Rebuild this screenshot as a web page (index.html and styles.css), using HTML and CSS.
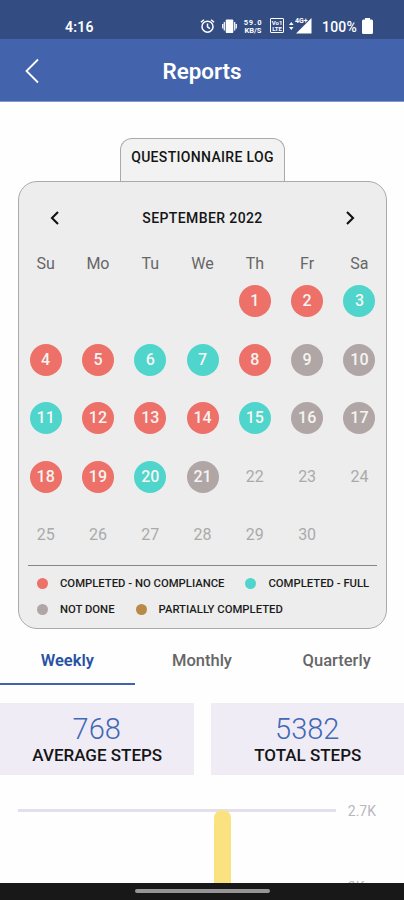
FILE: index.html
```html
<!DOCTYPE html>
<html lang="en">
<head>
  <meta charset="UTF-8">
  <title>Reports</title>
  <meta name="viewport" content="width=device-width, initial-scale=1.0">
  <link rel="stylesheet" href="styles.css">
</head>
<body>
  <div class="screen">
    <div class="status-bar">
      <span class="time">4:16</span>
      <div class="status-icons">
        <svg class="alarm" width="15" height="16" viewBox="0 0 16 16" fill="none" stroke="#fff" stroke-width="1.6">
          <circle cx="8" cy="8.7" r="5.9"/>
          <path d="M8 5.2v3.8l2.6 1.7M1 4l3.2-2.7M15 4l-3.2-2.7"/>
        </svg>
        <svg class="vibrate" width="15" height="16" viewBox="0 0 15 16">
          <rect x="3.7" y="1.500" width="7.600" height="13.500" rx="1" fill="#fff"/>
          <path d="M2.300 4v8.500M12.700 4v8.500M.7 6v4.500M14.300 6v4.500" stroke="#fff" stroke-width="1.200"/>
        </svg>
        <div class="speed"><span>59.0</span><span>KB/S</span></div>
        <div class="volte"><span>Vo1</span><span>LTE</span></div>
        <div class="signal">
          <svg width="23" height="16" viewBox="0 0 23 16" fill="#fff">
            <path d="M0 7l2.300-3 2.300 3zM0 9h4.600l-2.300 3zM7 15.500L22.500 0v15.500z"/>
          </svg>
          <span>4G+</span>
        </div>
        <span class="percent">100%</span>
        <svg class="battery" width="11" height="16" viewBox="0 0 11 16" fill="#fff">
          <path d="M3 0h5v1.500h1.500q1.500 0 1.500 1.500v11.500q0 1.500-1.500 1.500h-8Q0 16 0 14.500V3q0-1.500 1.500-1.500H3z"/>
        </svg>
      </div>
    </div>

    <div class="header">
      <button class="back" aria-label="Back">
        <svg width="16" height="26" viewBox="0 0 16 26" fill="none" stroke="#fff" stroke-width="1.8">
          <path d="M14 1.500L2.500 13 14 24.500"/>
        </svg>
      </button>
      <h1>Reports</h1>
    </div>

    <div class="log-tab">QUESTIONNAIRE LOG</div>
    <div class="calendar">
      <div class="calendar-header">
        <svg width="10" height="14" viewBox="0 0 10 14" fill="none" stroke="#111" stroke-width="2.100">
          <path d="M8 1L2 7l6 6"/>
        </svg>
        <h2>SEPTEMBER 2022</h2>
        <svg width="10" height="14" viewBox="0 0 10 14" fill="none" stroke="#111" stroke-width="2.100">
          <path d="M2 1l6 6-6 6"/>
        </svg>
      </div>
      <div class="weekdays">
        <span>Su</span><span>Mo</span><span>Tu</span><span>We</span><span>Th</span><span>Fr</span><span>Sa</span>
      </div>
      <div class="days">
        <span></span>
        <span></span>
        <span></span>
        <span></span>
        <span class="day red">1</span>
        <span class="day red">2</span>
        <span class="day teal">3</span>

        <span class="day red">4</span>
        <span class="day red">5</span>
        <span class="day teal">6</span>
        <span class="day teal">7</span>
        <span class="day red">8</span>
        <span class="day gray">9</span>
        <span class="day gray">10</span>

        <span class="day teal">11</span>
        <span class="day red">12</span>
        <span class="day red">13</span>
        <span class="day red">14</span>
        <span class="day teal">15</span>
        <span class="day gray">16</span>
        <span class="day gray">17</span>

        <span class="day red">18</span>
        <span class="day red">19</span>
        <span class="day teal">20</span>
        <span class="day gray">21</span>
        <span class="day">22</span>
        <span class="day">23</span>
        <span class="day">24</span>

        <span class="day">25</span>
        <span class="day">26</span>
        <span class="day">27</span>
        <span class="day">28</span>
        <span class="day">29</span>
        <span class="day">30</span>
      </div>
      <div class="legend">
        <div class="legend-row">
          <span class="legend-item"><i class="dot red"></i>COMPLETED - NO COMPLIANCE</span>
          <span class="legend-item"><i class="dot teal"></i>COMPLETED - FULL</span>
        </div>
        <div class="legend-row">
          <span class="legend-item"><i class="dot gray"></i>NOT DONE</span>
          <span class="legend-item"><i class="dot brown"></i>PARTIALLY COMPLETED</span>
        </div>
      </div>
    </div>

    <div class="tabs">
      <button class="active">Weekly</button>
      <button>Monthly</button>
      <button>Quarterly</button>
    </div>

    <div class="stats">
      <div class="stat">
        <strong>768</strong>
        <span>AVERAGE STEPS</span>
      </div>
      <div class="stat">
        <strong>5382</strong>
        <span>TOTAL STEPS</span>
      </div>
    </div>

    <div class="chart">
      <div class="plot">
        <div class="bar"></div>
      </div>
      <div class="axis">
        <span>2.7K</span>
        <span>2K</span>
      </div>
    </div>

    <div class="nav-bar"><div class="handle"></div></div>
  </div>
</body>
</html>
```

FILE: styles.css
```css
* {
  box-sizing: border-box;
  margin: 0;
  padding: 0;
}

body {
  font-family: Roboto, "Liberation Sans", sans-serif;
  background-color: #fefefe;
  overflow: hidden;
}

button {
  font-family: inherit;
  background: none;
  border: none;
  cursor: pointer;
}

svg {
  display: block;
  flex-shrink: 0;
}

.screen {
  width: 404px;
  height: 900px;
  display: flex;
  flex-direction: column;
  overflow: hidden;
}

.screen > * {
  flex-shrink: 0;
}

/* status bar */
.status-bar {
  height: 39px;
  background-color: #334d82;
  color: #fff;
  display: flex;
  justify-content: space-between;
  padding: 18px 31px 0 65px;
}

.time {
  font-size: 14px;
  font-weight: 600;
  line-height: 18px;
  letter-spacing: 0.2px;
}

.status-icons {
  display: flex;
  align-items: flex-start;
}

.vibrate {
  margin-left: 7px;
}

.speed {
  width: 20px;
  margin-left: 6px;
  padding-top: 1px;
  display: flex;
  flex-direction: column;
  align-items: center;
  font-size: 7.5px;
  font-weight: 700;
  line-height: 7.5px;
}

.speed span:first-child {
  letter-spacing: 0.9px;
}

.volte {
  width: 14px;
  height: 15px;
  margin-left: 7px;
  padding-top: 1px;
  border: 1.5px solid #fff;
  border-radius: 1px;
  display: flex;
  flex-direction: column;
  align-items: center;
  font-size: 6px;
  font-weight: 700;
  line-height: 6px;
}

.signal {
  position: relative;
  margin-left: 5px;
}

.signal span {
  position: absolute;
  left: 6px;
  top: 0;
  font-size: 7px;
  font-weight: 700;
  line-height: 7px;
  text-shadow: 0 0 1px #334d82, 0 0 1px #334d82;
}

.percent {
  margin-left: 10px;
  font-size: 14px;
  font-weight: 500;
  line-height: 18px;
  letter-spacing: 0.2px;
}

.battery {
  margin-left: 5px;
}

/* header */
.header {
  height: 63px;
  padding-top: 1px;
  background-color: #4364ad;
  border-bottom: 1px solid #7f97c8;
  display: grid;
  grid-template-columns: 64px 1fr 64px;
  align-items: center;
}

.header h1 {
  padding-top: 1px;
  color: #fff;
  font-size: 22.4px;
  font-weight: 600;
  text-align: center;
}

.back {
  padding-left: 24px;
}

/* calendar */
.log-tab {
  align-self: flex-start;
  width: 165px;
  height: 43px;
  margin: 36px 0 0 120px;
  padding-top: 9px;
  border: 1px solid #aaa;
  border-bottom: none;
  border-radius: 12px 12px 0 0;
  background-color: #f2f2f2;
  color: #151515;
  font-size: 14px;
  font-weight: 500;
  line-height: 18px;
  letter-spacing: 0.33px;
  text-align: center;
  white-space: nowrap;
}

.calendar {
  width: 369px;
  height: 448px;
  margin-left: 18px;
  border: 1px solid #aaa;
  border-radius: 19px;
  background-color: #ededed;
}

.calendar-header {
  height: 72px;
  padding: 0 31px;
  display: flex;
  justify-content: space-between;
  align-items: center;
}

.calendar-header h2 {
  color: #151515;
  font-size: 14px;
  font-weight: 500;
  letter-spacing: 0.4px;
}

.weekdays,
.days {
  display: grid;
  grid-template-columns: repeat(7, 52.3px);
  justify-items: center;
  align-items: center;
  padding-left: 0.5px;
}

.weekdays {
  height: 18px;
  color: #666;
  font-size: 16px;
}

.days {
  grid-auto-rows: 58.5px;
}

.day {
  width: 32px;
  height: 32px;
  border-radius: 50%;
  color: #aaa;
  font-size: 16px;
  line-height: 32px;
  text-align: center;
}

.day.red,
.day.teal,
.day.gray {
  color: #f6f4f2;
  font-weight: 500;
}

.red {
  background-color: #ed7069;
}

.teal {
  background-color: #4fd5cb;
}

.gray {
  background-color: #b1a6a6;
}

.brown {
  background-color: #b88a47;
}

.legend {
  margin: 0 9px;
  padding: 5px 0 0 9px;
  border-top: 1px solid #858585;
}

.legend-row {
  height: 26px;
  display: flex;
  align-items: center;
  gap: 21px;
}

.legend-item {
  display: flex;
  align-items: center;
  gap: 12px;
  color: #1c1c1c;
  font-size: 11.3px;
  font-weight: 500;
  white-space: nowrap;
}

.dot {
  width: 11px;
  height: 11px;
  border-radius: 50%;
}

/* tabs */
.tabs {
  height: 56px;
  display: grid;
  grid-template-columns: repeat(3, 1fr);
}

.tabs button {
  padding-top: 8px;
  border-bottom: 2px solid transparent;
  color: #666;
  font-size: 16.5px;
  font-weight: 500;
}

.tabs .active {
  color: #2852a3;
  font-weight: 600;
  border-color: #3f63ad;
}

/* step totals */
.stats {
  margin-top: 18px;
  display: grid;
  grid-template-columns: 1fr 1fr;
  gap: 17px;
}

.stat {
  height: 72px;
  padding-top: 10px;
  background-color: #f0ecf6;
  display: flex;
  flex-direction: column;
  align-items: center;
}

.stat strong {
  color: #4268b5;
  font-size: 29px;
  font-weight: 300;
  line-height: 32px;
}

.stat span {
  padding-left: 1px;
  color: #151515;
  font-size: 17px;
  font-weight: 500;
  line-height: 21px;
}

/* chart */
.chart {
  height: 108px;
  padding: 34px 28px 0 18px;
  display: flex;
  justify-content: space-between;
  overflow: hidden;
}

.plot {
  width: 318px;
  border-top: 3px solid #e3dfec;
}

.bar {
  width: 17px;
  height: 90px;
  margin: -2px 0 0 196px;
  border-radius: 8px 8px 0 0;
  background-color: #fbe281;
}

.axis {
  margin-top: -7px;
  display: flex;
  flex-direction: column;
  gap: 57px;
  color: #b8b6c0;
  font-size: 14px;
  line-height: 19px;
}

/* bottom bar */
.nav-bar {
  height: 17px;
  background-color: #181818;
  display: flex;
  justify-content: center;
  padding-top: 6px;
}

.handle {
  width: 135px;
  height: 4px;
  border-radius: 2px;
  background-color: #969696;
}
```
